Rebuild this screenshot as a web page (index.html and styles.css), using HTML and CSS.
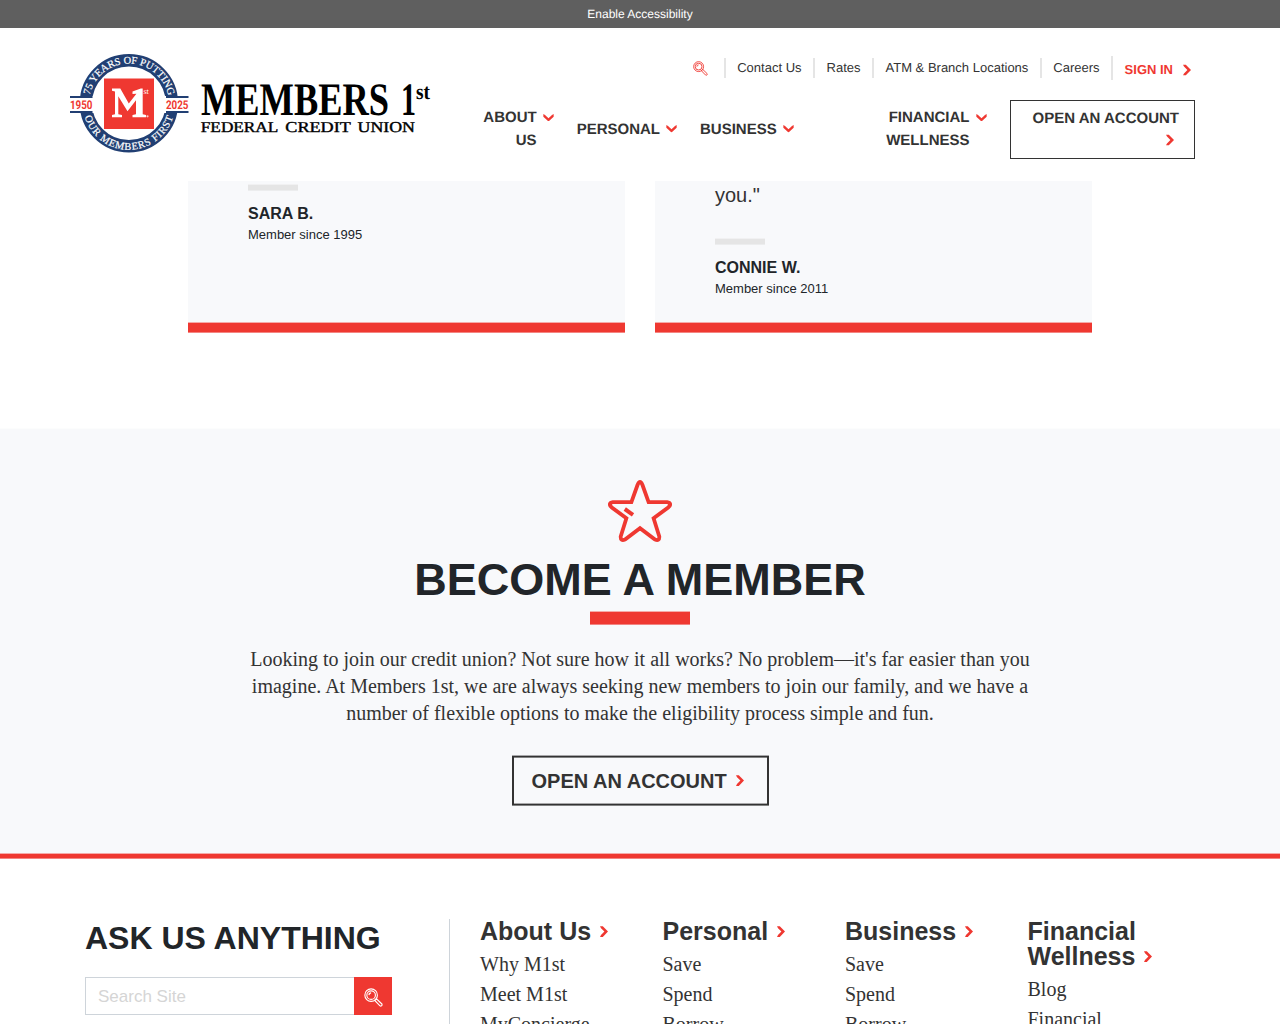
FILE: index.html
```html
<!DOCTYPE html>
<html lang="en">
<head>
<meta charset="utf-8">
<title>Members 1st Federal Credit Union</title>
<link rel="stylesheet" href="styles.css">
</head>
<body>
<svg class="defs" aria-hidden="true">
  <symbol id="right" viewBox="0 0 8 12"><path d="M0 .7H2.8L8 6L2.8 11.3H0L1 9.4L4.4 6L1 2.6Z"/></symbol>
  <symbol id="down" viewBox="0 0 11 8"><path d="M0 0L1.8 1L5.5 4.6L9.2 1L11 0V2.8L5.5 8L0 2.8Z"/></symbol>
  <symbol id="search" viewBox="0 0 20 20">
    <g fill="none" stroke="currentColor" stroke-width="1.2">
      <circle cx="7.5" cy="7.5" r="6.6"/><circle cx="7.5" cy="7.5" r="4.5"/>
      <path d="M5.2 7.5A2.4 2.4 0 0 1 7.5 5.2"/>
      <path d="M11.3 13.1L13.1 11.3L18.6 16.6A1.4 1.4 0 0 1 16.6 18.6Z"/>
    </g>
  </symbol>
</svg>

<div class="access">Enable Accessibility</div>
<header class="header">
  <a class="logo">
    <svg width="362" height="102" viewBox="0 0 362 102">
      <defs>
        <path id="arc-top" d="M18.9 50.5A40 40 0 0 1 98.9 50.5"/>
        <path id="arc-bottom" d="M12.6 50.5A46.3 46.3 0 0 0 105.2 50.5"/>
      </defs>
      <circle cx="58.9" cy="50.3" r="43" fill="none" stroke="#213f73" stroke-width="12.4"/>
      <rect x="0" y="43" width="118.5" height="17" fill="#fff"/>
      <path d="M0 44H22.5M96 44H118.5M0 59H22.5M96 59H118.5" stroke="#213f73" stroke-width="2.2"/>
      <rect x="34" y="25.5" width="50" height="50.5" fill="#ef3831"/>
      <g class="year"><text x="0" y="55.7" textLength="22.5" lengthAdjust="spacingAndGlyphs">1950</text><text x="96" y="55.7" textLength="22.5" lengthAdjust="spacingAndGlyphs">2025</text></g>
      <path fill="#fff" d="M42 35.5H50.3L58.8 50.5L66.4 40.8L62.5 41V38.6L70.8 35.5H72.7V61.2L76 62V64.3H62.5V62L66 61.2V47.2L57.5 58.2L48.3 43.2V61.2L52 62V64.3H42V62L45 61.2V38.6L42 37.8Z"/>
      <text class="mini" x="73.4" y="41">st</text>
      <circle cx="77.5" cy="63.3" r="1.1" fill="#fff" opacity=".75"/>
      <text class="ring"><textPath href="#arc-top" startOffset="8.5" textLength="109" lengthAdjust="spacing">75 YEARS OF PUTTING</textPath></text>
      <text class="ring"><textPath href="#arc-bottom" startOffset="13.5" textLength="118" lengthAdjust="spacing">OUR MEMBERS FIRST</textPath></text>
      <text class="brand" x="131" y="61.5" textLength="188" lengthAdjust="spacingAndGlyphs">MEMBERS</text>
      <text class="brand" x="331" y="61.5" textLength="15" lengthAdjust="spacingAndGlyphs">1</text>
      <text class="brand-st" x="346" y="46" textLength="14" lengthAdjust="spacingAndGlyphs">st</text>
      <g class="brand-sub"><text x="130.8" y="78.5" textLength="77.5" lengthAdjust="spacingAndGlyphs">FEDERAL</text><text x="215.3" y="78.5" textLength="65.5" lengthAdjust="spacingAndGlyphs">CREDIT</text><text x="287.5" y="78.5" textLength="57.5" lengthAdjust="spacingAndGlyphs">UNION</text></g>
    </svg>
  </a>
  <div class="menus">
    <div class="utility">
      <svg class="find"><use href="#search"/></svg>
      <a>Contact Us</a><a>Rates</a><a>ATM &amp; Branch Locations</a><a>Careers</a>
      <a class="signin">SIGN IN <svg class="right"><use href="#right"/></svg></a>
    </div>
    <nav class="nav">
      <a class="two">ABOUT<br>US</a><svg class="down high"><use href="#down"/></svg>
      <a>PERSONAL</a><svg class="down"><use href="#down"/></svg>
      <a>BUSINESS</a><svg class="down"><use href="#down"/></svg>
      <a class="two fin">FINANCIAL<br>WELLNESS</a><svg class="down high"><use href="#down"/></svg>
      <a class="open">OPEN AN ACCOUNT<svg class="right"><use href="#right"/></svg></a>
    </nav>
  </div>
</header>

<main class="main">
  <section class="quotes">
    <article class="card short"><i class="dash"></i><h3>SARA B.</h3><p>Member since 1995</p></article>
    <article class="card"><blockquote>you."</blockquote><i class="dash"></i><h3>CONNIE W.</h3><p>Member since 2011</p></article>
  </section>
  <section class="join">
    <svg class="star" viewBox="0 0 64 62"><path d="M29.6 4.8Q32 -1 34.4 4.8L40.6 22.2H59Q64.5 23.2 60.5 27.2L45.6 38.3L51.3 56.5Q51.5 61.3 47 59.5L32 48.2L17 59.5Q12.5 61.3 12.7 56.5L18.4 38.3L3.5 27.2Q-.5 23.2 5 22.2H23.4Z"/><path d="M16.8 29L25 34.8" stroke-width="4"/></svg>
    <h2>BECOME A MEMBER</h2>
    <i class="rule"></i>
    <p>Looking to join our credit union? Not sure how it all works? No problem—it's far easier than you<br>imagine. At Members 1st, we are always seeking new members to join our family, and we have a<br>number of flexible options to make the eligibility process simple and fun.</p>
    <a class="cta">OPEN AN ACCOUNT<svg class="right"><use href="#right"/></svg></a>
  </section>
</main>

<footer class="footer">
  <div class="ask">
    <h2>ASK US ANYTHING</h2>
    <div class="search"><input type="text" placeholder="Search Site"><button aria-label="Search"><svg><use href="#search"/></svg></button></div>
  </div>
  <div class="columns">
    <div><h4>About Us<svg class="right"><use href="#right"/></svg></h4><a>Why M1st</a><a>Meet M1st</a><a>MyConcierge</a></div>
    <div><h4>Personal<svg class="right"><use href="#right"/></svg></h4><a>Save</a><a>Spend</a><a>Borrow</a></div>
    <div><h4>Business<svg class="right"><use href="#right"/></svg></h4><a>Save</a><a>Spend</a><a>Borrow</a></div>
    <div><h4>Financial<br>Wellness<svg class="right"><use href="#right"/></svg></h4><a>Blog</a><a>Financial</a></div>
  </div>
</footer>
</body>
</html>
```

FILE: styles.css
```css
* { box-sizing: border-box; }
body { margin: 0; height: 1024px; overflow: hidden; background: #fff; color: #212529; font-family: "Liberation Sans", Arial, sans-serif; }
h2, h3, h4, p, blockquote { margin: 0; }
svg { display: block; flex: none; }
.defs { position: absolute; width: 0; height: 0; }
.right { width: 8px; height: 12px; fill: #ef3831; }
.down { width: 11px; height: 7.5px; fill: #ef3831; }

.access { height: 28px; background: #5f5f5f; color: #fff; font-size: 12px; line-height: 28px; text-align: center; text-rendering: geometricPrecision; }
.header { position: relative; z-index: 1; display: flex; height: 153px; padding: 25px 85px 0 70px; background: #fff; color: #333; text-rendering: geometricPrecision; }
.logo { width: 362px; flex: none; }
.year { font: bold 12px Roboto, sans-serif; fill: #ef3831; }
.mini { font: 8px "Liberation Serif", serif; fill: #fff; }
.ring { font: 10.4px "Liberation Serif", serif; fill: #fff; stroke: #fff; stroke-width: .2px; }
.brand { font: bold 46.5px "Liberation Serif", serif; fill: #000; }
.brand-st { font: bold 22px "Liberation Serif", serif; fill: #000; }
.brand-sub { font: 15px "Liberation Serif", serif; fill: #000; stroke: #000; stroke-width: .4px; }

.menus { flex: 1; }
.utility { display: flex; justify-content: flex-end; align-items: center; height: 30px; padding-right: 4px; font-size: 13px; white-space: nowrap; }
.utility a { height: 20px; line-height: 20px; padding: 0 11.5px; border-left: 2px solid #e5e5e5; }
.find { width: 15px; height: 15px; margin-right: 16px; color: #ef3831; }
.utility .signin { display: flex; align-items: center; gap: 10px; height: 24px; padding: 3px 0 0 11.5px; color: #ef3831; font-weight: bold; }
.nav { display: flex; justify-content: flex-end; align-items: center; height: 59px; margin-top: 17px; font-size: 15px; font-weight: bold; line-height: 23px; text-align: right; white-space: nowrap; }
.nav .down { margin: -1px 22.5px 0 6.5px; }
.nav .high { align-self: flex-start; margin-top: 13.5px; }
.nav .two { padding-bottom: 1px; }
.nav .fin { margin-left: 69.5px; }
.nav .open { width: 185.5px; height: 58.5px; padding: 6px 15px 0 0; border: 1px solid #333; }
.open .right { margin: 4px 5px 0 auto; }

.main { transform: translateY(-.4px); }
.quotes { display: grid; grid-template-columns: 437px 437px; gap: 30px; padding: 0 188px; height: 248px; align-items: start; }
.card { height: 152px; padding-left: 60px; background: #f8f9fb; border-bottom: 10px solid #ef3831; }
.short { padding-top: 4px; }
.card blockquote { height: 58px; padding-top: 1px; font-size: 20px; line-height: 27px; color: #333; }
.dash { display: block; width: 50px; height: 6px; background: #e5e5e5; }
.card h3 { margin-top: 13px; font-size: 16px; line-height: 20px; }
.card p { margin-top: 1px; font-size: 13px; line-height: 20px; }

.join { display: flex; flex-direction: column; align-items: center; height: 430px; padding-top: 51px; background: #f8f9fb; border-bottom: 5px solid #ef3831; }
.star { width: 64px; height: 62px; fill: none; stroke: #ef3831; stroke-width: 3.8; transform: translateY(.4px); }
.join h2 { margin-top: 14px; font-size: 45px; line-height: 48px; }
.rule { width: 100px; height: 13px; margin-top: 8px; background: #ef3831; }
.join p { margin-top: 21px; font: 20px/27px "Liberation Serif", serif; color: #333; text-align: center; white-space: nowrap; }
.cta { display: flex; align-items: center; gap: 9px; width: 257px; height: 50px; margin-top: 29px; padding-left: 18px; border: 2px solid #333; color: #333; font-size: 20px; font-weight: bold; white-space: nowrap; }

.footer { display: flex; height: 165px; padding: 60px 70px 0 85px; overflow: hidden; }
.ask { width: 365px; border-right: 1px solid #ced4da; }
.ask h2 { font-size: 32px; line-height: 38px; transform: translateY(-.4px); }
.search { display: flex; width: 307px; height: 38px; margin-top: 20px; }
.search input { flex: 1; min-width: 0; padding: 2px 12px 0; border: 1px solid #ced4da; border-right: 0; font: 17px "Liberation Sans", sans-serif; }
.search input::placeholder { color: #d5d5d5; opacity: 1; }
.search button { display: grid; place-items: center; width: 38px; padding: 2px 0 0; border: 0; background: #ef3831; color: #fff; }
.search button svg { width: 19px; height: 19px; }
.columns { display: grid; grid-template-columns: repeat(4, 182.5px); margin-left: 30px; color: #333; transform: translateY(-.4px); }
.columns h4 { margin-bottom: 5px; font-size: 25px; line-height: 25px; }
.columns h4 .right { display: inline-block; margin-left: 9px; vertical-align: 2px; }
.columns a { display: block; font: 20px/30px "Liberation Serif", serif; }
```
